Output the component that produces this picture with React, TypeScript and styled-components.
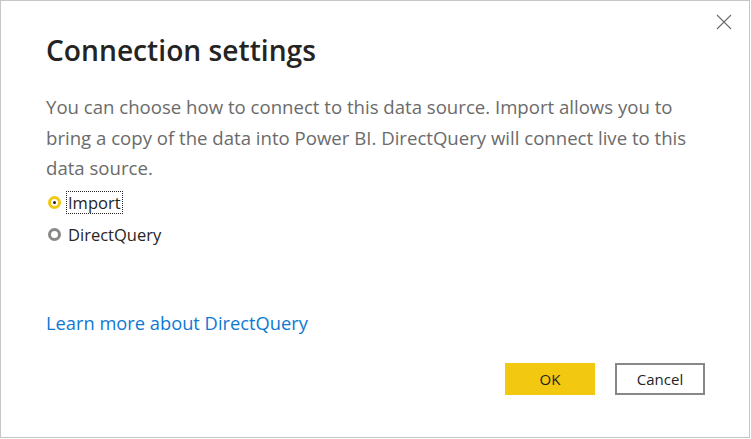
import React, { useState } from "react";
import styled, { createGlobalStyle } from "styled-components";

const GlobalStyle = createGlobalStyle`
	html, body {
		margin: 0;
		padding: 0;
		background: #ffffff;
	}
	body {
		font-family: "Open Sans", "Noto Sans", sans-serif;
	}
`;

const options = ["Import", "DirectQuery"];

const App = () => {
	const [mode, setMode] = useState("Import");
	return (
		<>
			<GlobalStyle />
			<Dialog>
				<CloseButton aria-label="Close">
					<svg width="16" height="16" viewBox="0 0 16 16">
						<path d="M1 1 L15 15 M15 1 L1 15" stroke="#6b6b6b" strokeWidth="1.1" fill="none" />
					</svg>
				</CloseButton>
				<Title>Connection settings</Title>
				<Description>
					You can choose how to connect to this data source. Import allows you to
					bring a copy of the data into Power BI. DirectQuery will connect live to this
					data source.
				</Description>
				<RadioGroup>
					{options.map((opt) => (
						<RadioRow key={opt} onClick={() => setMode(opt)}>
							<RadioDot $checked={mode === opt} />
							<RadioLabel $focused={mode === opt}>{opt}</RadioLabel>
						</RadioRow>
					))}
				</RadioGroup>
				<LearnLink href="#">Learn more about DirectQuery</LearnLink>
				<Footer>
					<PrimaryButton>OK</PrimaryButton>
					<SecondaryButton>Cancel</SecondaryButton>
				</Footer>
			</Dialog>
		</>
	);
};

const Dialog = styled.div`
	position: relative;
	box-sizing: border-box;
	width: 750px;
	height: 438px;
	border: 1px solid #c6c6c6;
	background: #ffffff;
	padding: 27px 44px 0 45px;
	display: flex;
	flex-direction: column;
`;

const CloseButton = styled.button`
	position: absolute;
	top: 12px;
	right: 16px;
	width: 18px;
	height: 18px;
	padding: 0;
	border: none;
	background: transparent;
	display: flex;
	align-items: center;
	justify-content: center;
	cursor: pointer;
`;

const Title = styled.h1`
	margin: 0;
	font-size: 28.2px;
	font-weight: 600;
	line-height: 44px;
	color: #252423;
`;

const Description = styled.p`
	margin: 20px 0 0 0;
	max-width: 648px;
	font-size: 18.6px;
	line-height: 30.5px;
	color: #6b6b6b;
`;

const RadioGroup = styled.div`
	display: flex;
	flex-direction: column;
	gap: 10px;
	margin-top: 8px;
`;

const RadioRow = styled.label`
	display: flex;
	align-items: center;
	gap: 6px;
	height: 22px;
	cursor: pointer;
`;

const RadioDot = styled.span<{ $checked: boolean }>`
	box-sizing: border-box;
	width: 13px;
	height: 13px;
	margin-left: 2px;
	border-radius: 50%;
	border: 3px solid ${(p) => (p.$checked ? "#f2c811" : "#8a8886")};
	display: flex;
	align-items: center;
	justify-content: center;
	&::after {
		content: "";
		width: 3px;
		height: 3px;
		border-radius: 50%;
		background: ${(p) => (p.$checked ? "#252423" : "transparent")};
	}
`;

const RadioLabel = styled.span<{ $focused: boolean }>`
	font-size: 16.5px;
	color: #252423;
	line-height: 21px;
	padding: 0 1px;
	outline: ${(p) => (p.$focused ? "1px dotted #252423" : "none")};
`;

const LearnLink = styled.a`
	margin-top: 65px;
	align-self: flex-start;
	font-size: 18.3px;
	line-height: 24px;
	color: #0f78d4;
	text-decoration: none;
`;

const Footer = styled.div`
	display: flex;
	justify-content: flex-end;
	gap: 20px;
	margin-top: 28px;
`;

const BaseButton = styled.button`
	box-sizing: border-box;
	width: 90px;
	height: 32px;
	font-family: inherit;
	font-size: 15px;
	color: #252423;
	cursor: pointer;
`;

const PrimaryButton = styled(BaseButton)`
	border: none;
	background: #f2c811;
`;

const SecondaryButton = styled(BaseButton)`
	border: 2px solid #8a8886;
	background: #ffffff;
`;

export default App;
